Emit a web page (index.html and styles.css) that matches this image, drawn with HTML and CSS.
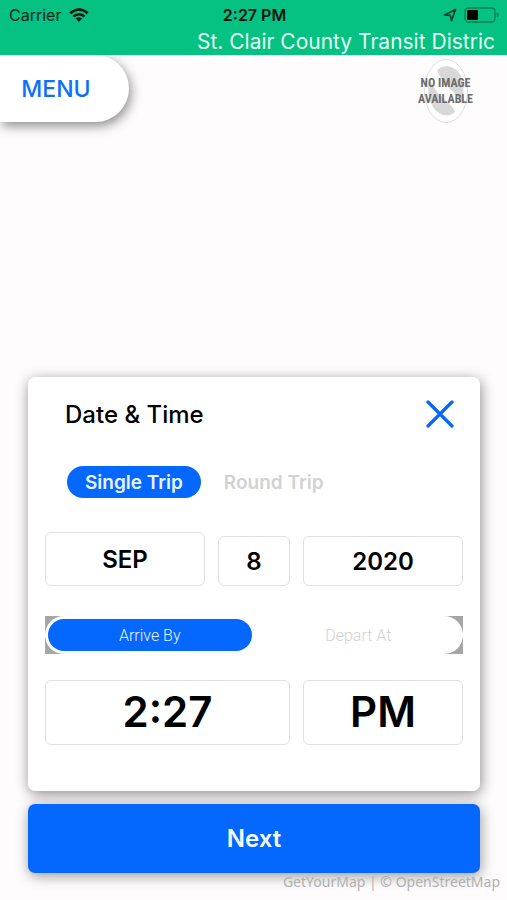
FILE: index.html
```html
<!DOCTYPE html>
<html lang="en">
<head>
<meta charset="utf-8">
<meta name="viewport" content="width=device-width, initial-scale=1">
<title>Date &amp; Time</title>
<link rel="stylesheet" href="styles.css">
</head>
<body>
<header class="topbar">
  <div class="status">
    <div class="carrier">
      <span>Carrier</span>
      <svg width="20" height="14" viewBox="0 0 20 14" aria-hidden="true">
        <g fill="none" stroke="#04150f" stroke-width="2.6">
          <path d="M1.3 5.2Q10-2.2 18.7 5.2"/>
          <path d="M4.4 8.6Q10 3.9 15.6 8.6"/>
        </g>
        <path d="M6.8 10.6Q10 8 13.2 10.6L10 13.8Z" fill="#04150f"/>
      </svg>
    </div>
    <span class="clock">2:27 PM</span>
    <div class="indicators">
      <svg width="14" height="14" viewBox="0 0 14 14" aria-hidden="true">
        <path d="M1.5 7L12.5 1.5L8.6 12.5L7.2 7.4Z" fill="none" stroke="#06412f" stroke-width="1.7" stroke-linejoin="round"/>
      </svg>
      <svg width="36" height="16" viewBox="0 0 36 16" aria-hidden="true">
        <rect x="1" y="1" width="30" height="14" rx="3.5" fill="none" stroke="#067d57" stroke-width="1.3"/>
        <rect x="3" y="3" width="11" height="10" rx="1" fill="#000"/>
        <path d="M32.8 5.5Q35 6.2 35 8T32.8 10.5Z" fill="#067d57"/>
      </svg>
    </div>
  </div>
  <h1 class="agency">St. Clair County Transit Distric</h1>
</header>
<main class="map">
  <div class="map-top">
    <button class="menu" type="button">MENU</button>
    <div class="no-image">
      <svg width="50" height="66" viewBox="0 0 50 66" aria-hidden="true">
        <ellipse cx="25" cy="33" rx="21.5" ry="31.5" fill="#fff" stroke="#dedede" stroke-width="1"/>
        <path d="M16 12C22 6 32 7 38 15C43 22 44 35 40 46C37 39 34 35 29 31C25 27 18 19 16 12Z" fill="#d8d8d8"/>
        <path d="M9 21C11 28 15 33 20 38C25 43 32 48 34 54C28 60 18 58 12 49C7 41 6 30 9 21Z" fill="#d8d8d8"/>
      </svg>
      <span class="no-image-text">NO IMAGE<br>AVAILABLE</span>
    </div>
  </div>
  <div class="sheet">
    <section class="card" aria-labelledby="card-title">
      <div class="card-head">
        <h2 id="card-title">Date &amp; Time</h2>
        <button class="close" type="button" aria-label="Close">
          <svg width="28" height="28" viewBox="0 0 28 28" aria-hidden="true">
            <path d="M2 2L26 26M26 2L2 26" stroke="#0568fb" stroke-width="3.2" stroke-linecap="round"/>
          </svg>
        </button>
      </div>
      <div class="trip">
        <button class="trip-option selected" type="button" aria-pressed="true">Single Trip</button>
        <button class="trip-option" type="button" aria-pressed="false">Round Trip</button>
      </div>
      <div class="date-row">
        <button class="field month" type="button">SEP</button>
        <button class="field" type="button">8</button>
        <button class="field" type="button">2020</button>
      </div>
      <div class="direction">
        <div class="direction-track">
          <button class="direction-option selected" type="button" aria-pressed="true">Arrive By</button>
          <button class="direction-option" type="button" aria-pressed="false">Depart At</button>
        </div>
      </div>
      <div class="time-row">
        <button class="field time" type="button">2:27</button>
        <button class="field time" type="button">PM</button>
      </div>
    </section>
    <button class="next" type="button">Next</button>
  </div>
  <footer class="credit"><a href="#">GetYourMap</a> | © <a href="#">OpenStreetMap</a></footer>
</main>
</body>
</html>
```
FILE: styles.css
```css
* {
  box-sizing: border-box;
}

body {
  margin: 0;
  min-height: 100vh;
  display: flex;
  flex-direction: column;
  background: #fefcfd;
  color: #000;
  font-family: Inter, "Liberation Sans", sans-serif;
}

button {
  margin: 0;
  padding: 0;
  border: 0;
  background: none;
  color: inherit;
  font: inherit;
  cursor: pointer;
}

svg {
  display: block;
}

h1,
h2 {
  margin: 0;
}

.topbar {
  background: #05c182;
}

.status {
  display: grid;
  grid-template-columns: 1fr auto 1fr;
  align-items: center;
  height: 28px;
  padding: 2px 7px 0 9px;
  font-size: 16px;
  color: #04251a;
}

.carrier {
  display: flex;
  align-items: center;
  gap: 8px;
}

.clock {
  font-weight: 600;
  color: #04150f;
}

.indicators {
  display: flex;
  align-items: center;
  justify-content: flex-end;
  gap: 7px;
}

.agency {
  padding-right: 12px;
  font-size: 21px;
  line-height: 27px;
  font-weight: 400;
  text-align: right;
  color: #e4fff3;
}

.map {
  flex: 1;
  display: flex;
  flex-direction: column;
}

.map-top {
  display: flex;
  justify-content: space-between;
  align-items: flex-start;
  overflow: hidden;
  padding-bottom: 24px;
}

.menu {
  width: 129px;
  height: 67px;
  padding-right: 17px;
  border-radius: 0 34px 34px 0;
  background: #fff;
  box-shadow: 2px 4px 12px rgba(0, 0, 0, 0.45);
  color: #0c70f8;
  font-size: 23px;
  font-weight: 500;
}

.no-image {
  display: grid;
  place-items: center;
  margin: 3px 34px 0 0;
}

.no-image > * {
  grid-area: 1 / 1;
}

.no-image-text {
  font: bold 12px/16px "Liberation Sans Narrow", "Roboto Condensed", Roboto, sans-serif;
  text-align: center;
  color: #6c6c6c;
}

.sheet {
  display: flex;
  flex-direction: column;
  gap: 13px;
  margin: auto 27px 0 28px;
}

.card {
  padding: 20px 17px 46px;
  border-radius: 7px;
  background: #fff;
  box-shadow: 1px 3px 14px rgba(0, 0, 0, 0.45);
}

.card-head {
  display: flex;
  justify-content: space-between;
  align-items: center;
  height: 34px;
  padding: 0 9px 0 20px;
}

.card-head h2 {
  font-size: 24px;
  font-weight: 500;
}

.trip {
  display: flex;
  gap: 5px;
  margin: 35px 0 34px 22px;
}

.trip-option {
  height: 32px;
  padding: 0 18px;
  border-radius: 16px;
  color: #d2d2d2;
  font-size: 19px;
  font-weight: 600;
}

.trip-option.selected {
  background: #0568fe;
  color: #e8f4ff;
}

.date-row {
  display: grid;
  grid-template-columns: 160fr 72fr 160fr;
  align-items: end;
  gap: 13px;
}

.field {
  height: 50px;
  border: 1px solid #e0e0e0;
  border-radius: 6px;
  background: #fff;
  font-size: 24px;
  font-weight: 600;
}

.field.month {
  height: 54px;
}

.direction {
  margin: 30px 0 26px;
  background: #a6a6a6;
}

.direction-track {
  display: grid;
  grid-template-columns: 1fr 1fr;
  gap: 5px;
  padding: 3px;
  border-radius: 19px;
  background: #fff;
}

.direction-option {
  height: 32px;
  border-radius: 16px;
  color: #d2d2d2;
  font-family: Roboto, "Liberation Sans", sans-serif;
  font-size: 16px;
  font-weight: 300;
}

.direction-option.selected {
  background: #0568fe;
  color: #e8f4ff;
}

.time-row {
  display: grid;
  grid-template-columns: 245fr 160fr;
  gap: 13px;
}

.field.time {
  height: 65px;
  padding-bottom: 3px;
  font-size: 42px;
}

.next {
  height: 69px;
  border-radius: 7px;
  background: #0568fe;
  box-shadow: 1px 3px 14px rgba(0, 0, 0, 0.4);
  color: #f4faff;
  font-size: 24px;
  font-weight: 600;
}

.credit {
  padding: 0 7px 9px 0;
  font: 14px/18px "Noto Sans", sans-serif;
  text-align: right;
  color: #b0b0b0;
}

.credit a {
  color: inherit;
  text-decoration: none;
}
```
